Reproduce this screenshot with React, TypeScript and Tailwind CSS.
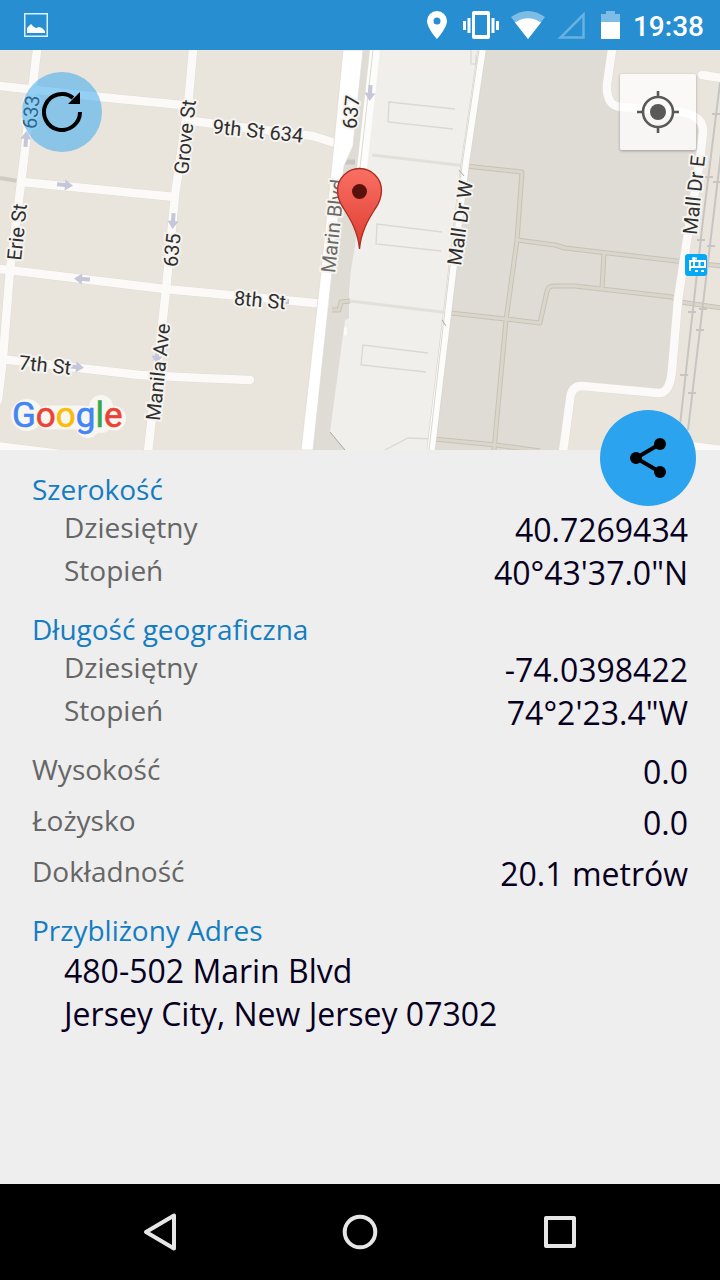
import React from "react";

const roadLabels = [
  { text: "633", x: 31, y: 112, angle: -84, fill: "#2f2f2f" },
  { text: "Grove St", x: 185, y: 137, angle: -84, fill: "#2f2f2f" },
  { text: "9th St 634", x: 258, y: 131, angle: 6, fill: "#2f2f2f" },
  { text: "637", x: 351, y: 112, angle: -84, fill: "#2f2f2f" },
  { text: "Marin Blvd", x: 333, y: 226, angle: -84, fill: "#6b6a66" },
  { text: "635", x: 172, y: 250, angle: -84, fill: "#2f2f2f" },
  { text: "Erie St", x: 17, y: 232, angle: -84, fill: "#2f2f2f" },
  { text: "8th St", x: 260, y: 300, angle: 5, fill: "#2f2f2f" },
  { text: "7th St", x: 45, y: 365, angle: 6, fill: "#2f2f2f" },
  { text: "Manila Ave", x: 158, y: 372, angle: -84, fill: "#2f2f2f" },
  { text: "Mall Dr W", x: 460, y: 223, angle: -82, fill: "#2f2f2f" },
  { text: "Mall Dr E", x: 694, y: 195, angle: -84, fill: "#2f2f2f" },
];

const streets = [
  "M37 50 21 183 10 270 3 357-2 400",
  "M193 50 188 106 175 195 166 290 148 452",
  "M0 86 100 97 182 105",
  "M186 120 215 124 313 136 338 144",
  "M22 182 175 197",
  "M0 269 165 289 325 304",
  "M0 359 140 375 200 378 250 380",
  "M-4 446 60 454",
  "M612 50 607 84Q606 107 622 107L670 111Q704 112 703 132L700 160 687 240 678 300 672 370Q670 394 658 393L582 386Q571 386 570 400L563 452",
  "M702 75 722 78",
  "M690 446 722 450",
];

const footpaths = [
  "M466 166 522 172 517 240 506 320 494 450",
  "M517 240 555 245 565 248 685 262 722 266",
  "M604 253 602 288",
  "M450 313 505 319 540 323 547 291Q548 286 554 286L575 286 672 297 680 302 722 308",
  "M434 439 496 445 540 451",
  "M332 310 339 310 341 302 350 301",
];

const arrows = [
  { x: 65, y: 185, angle: 5 },
  { x: 173, y: 221, angle: 94 },
  { x: 26, y: 139, angle: -86 },
  { x: 82, y: 279, angle: 184 },
  { x: 76, y: 367, angle: 5 },
  { x: 157, y: 356, angle: 94 },
  { x: 370, y: 93, angle: 94 },
];

const ticks = [
  [716, 114], [709, 177], [717, 182], [701, 240], [711, 246], [692, 312],
  [700, 330], [684, 375], [692, 393], [703, 309],
];

function MapPicture() {
  return (
    <svg
      className="block h-full w-full"
      viewBox="0 50 720 400"
      preserveAspectRatio="xMidYMid slice"
      role="img"
      aria-label="Mapa"
    >
      <rect x="-400" width="1600" height="500" fill="#e9e5dd" />
      <path d="M354 50H612L607 84Q606 107 622 107L670 111Q704 112 703 132L687 240 672 370Q670 394 658 393L582 386Q571 386 563 450H307L330 272Z" fill="#dfdbd5" />
      <path d="M376 50H485L465 165 451 275 431 450H345L330 432 345 320 349 318 349 292 351 270 356 240 366 165Z" fill="#f0efeb" />
      <path d="M330 432 345 450" stroke="#aaa8a3" />
      <g fill="none" stroke="#dad8d3" strokeWidth="1.3">
        <path d="M455 109 389 102 388 122 453 129" />
        <path d="M442 232 377 224 376 244 441 251" />
        <path d="M428 353 363 345 361 365 426 372" />
        <path d="M385 450 408 438 434 439" />
      </g>
      <g fill="none" stroke="#e2e0d9" strokeWidth="3">
        <path d="M372 155 466 166M350 301 450 313" />
      </g>
      <g fill="none" strokeLinejoin="round">
        {footpaths.map((d) => <path key={d} d={d} stroke="#c6c3b6" strokeWidth="5" />)}
        {footpaths.map((d) => <path key={d} d={d} stroke="#dad6cc" strokeWidth="3" />)}
        <path d="M0 178 18 181" stroke="#cfccc1" strokeWidth="4" />
      </g>
      <g fill="none" stroke="#c7c5c2" strokeWidth="2">
        <path d="M721 75 703 220 680 425M725 120 713 220 688 430" />
        {ticks.map(([x, y]) => <path key={`${x}-${y}`} d={`M${x - 4} ${y}h8`} />)}
      </g>
      <g fill="none" strokeLinecap="round" strokeLinejoin="round">
        {streets.map((d) => <path key={d} d={d} stroke="#e0dcd4" strokeWidth="9.5" />)}
        {streets.map((d) => <path key={d} d={d} stroke="#fbfaf8" strokeWidth="8.5" />)}
      </g>
      <g fill="none">
        <path d="M482 50 465 165 452 275 431 450" stroke="#d9d6cf" strokeWidth="9" />
        <path d="M482 50 465 165 452 275 431 450" stroke="#fcfcfa" strokeWidth="7.5" />
        <path d="M479 50 462 165 449 275 429 450" stroke="#d9d7d2" strokeWidth="1" />
        <path d="M471 50v14h5v-9" stroke="#d6d3cd" />
        <path d="M375 50 362 168" stroke="#fcfcfa" strokeWidth="10" />
        <path d="M373 50 360 168" stroke="#dcdad5" strokeWidth="1" />
        <path d="M345 162h10" stroke="#c9c6c0" strokeWidth="5" />
        <path d="M442 320 446 326M459 170 464 176" stroke="#aaa8a3" />
      </g>
      <path d="M343 50H363L353 146 344 166 332 272 313 450H301L321 272 333 153Z" fill="#fff" stroke="#dedad3" strokeWidth=".7" />
      <path d="m344 328 3-1v8l-3 1z" fill="#fafaf7" />
      <g fill="#c5c6d7">
        {arrows.map((a) => (
          <path key={`${a.x}-${a.y}`} transform={`translate(${a.x} ${a.y}) rotate(${a.angle})`} d="M-8-2H0V-5.500L8 0 0 5.500V2H-8Z" />
        ))}
        <rect x="285" y="299" width="4" height="5" />
      </g>
      <g
        className="font-[Roboto,sans-serif] text-[20px]"
        textAnchor="middle"
        stroke="#f6f4f0"
        strokeWidth="4"
        strokeLinejoin="round"
        paintOrder="stroke"
      >
        {roadLabels.map((l) => (
          <text key={l.text} transform={`translate(${l.x} ${l.y}) rotate(${l.angle})`} y="7" fill={l.fill}>
            {l.text}
          </text>
        ))}
      </g>
      <rect x="685" y="254" width="22" height="22" rx="3" fill="#03a9f4" />
      <g fill="none" stroke="#fff" strokeWidth="2">
        <path d="M694 257V268M692 258.500H697M690 261H705V267H690ZM699.500 261V267" />
        <path d="M690 261V271M695 271H698M701 271H704" />
      </g>
      <path d="M27 413.500V414M48 417.500H82M88 418V426M101 407V421M114 418V418.500" fill="none" stroke="#f8f6f1" strokeWidth="24" strokeLinecap="round" />
      <circle cx="27" cy="415" r="16" fill="#f8f6f1" />
      <text className="font-[Roboto,sans-serif] text-[35px]" x="12" y="427" strokeWidth=".6">
        <tspan fill="#4285f4" stroke="#4285f4">G</tspan>
        <tspan fill="#ea4335" stroke="#ea4335">o</tspan>
        <tspan fill="#fbbc05" stroke="#fbbc05">o</tspan>
        <tspan fill="#4285f4" stroke="#4285f4">g</tspan>
        <tspan fill="#34a853" stroke="#34a853">l</tspan>
        <tspan fill="#ea4335" stroke="#ea4335">e</tspan>
      </text>
      <defs>
        <linearGradient id="pin" x1="0" y1="0" x2="0" y2="1">
          <stop offset="0" stopColor="#fb7064" />
          <stop offset="1" stopColor="#dd3b2f" />
        </linearGradient>
      </defs>
      <path d="M359.500 249C358 232 351 220 344 209 339 202 337.500 197 337.500 190.500A22 22 0 0 1 381.500 190.500C381.500 197 380 202 375 209 368 220 361 232 359.500 249Z" fill="url(#pin)" stroke="#a92c22" strokeWidth="1.300" />
      <circle cx="359.500" cy="191.500" r="7.500" fill="#59110c" />
    </svg>
  );
}

function StatusBar() {
  return (
    <header className="flex h-[50px] shrink-0 items-center bg-[#278fd1] pr-4 pl-6 text-white">
      <svg className="h-6 w-6" viewBox="0 0 24 24" fill="none">
        <rect x=".75" y=".75" width="22.500" height="22.500" stroke="#d6f1ff" strokeWidth="1.500" />
        <path d="M3 20v-5l2-2 2-2 3 3 2 1 3-1 3 1 3 3v2z" fill="#fff" />
      </svg>
      <div className="ml-auto flex items-center">
        <svg className="mr-4 h-7 w-5" viewBox="0 0 20 28" fill="#fff">
          <path fillRule="evenodd" d="M10 0A10 10 0 0 0 0 10c0 7 10 18 10 18s10-11 10-18A10 10 0 0 0 10 0Zm0 6.500a3.500 3.500 0 1 1 0 7 3.500 3.500 0 0 1 0-7Z" />
        </svg>
        <svg className="mr-3 h-7 w-9" viewBox="0 0 36 28" fill="#fff">
          <path fillRule="evenodd" d="M11 0h14a2 2 0 0 1 2 2v24a2 2 0 0 1-2 2H11a2 2 0 0 1-2-2V2a2 2 0 0 1 2-2Zm1 4v20h12V4Z" />
          <path d="M0 10h3v9H0zM4.500 7h3v15h-3zM28.500 7h3v15h-3zM33 10h3v9h-3z" />
        </svg>
        <svg className="mr-3 h-7 w-8.5" viewBox="0 0 34 28">
          <path d="M17 28 0 6Q17-6 34 6Z" fill="#7cbce5" />
          <path d="M17 28 4 11.500Q17 3 30 11.500Z" fill="#fff" />
        </svg>
        <svg className="mr-4 h-7 w-7" viewBox="0 0 28 28">
          <path d="M3.500 26.500H26.500V3.500Z" fill="none" stroke="#68b1e0" strokeWidth="2.500" />
        </svg>
        <svg className="mr-3 h-7 w-5" viewBox="0 0 20 28">
          <path d="M0 3h5V0h9v3h5v9H0z" fill="#7cbce5" />
          <path d="M0 11h19v17H0z" fill="#fff" />
        </svg>
        <time className="pt-1 font-[Roboto,sans-serif] text-[28px] leading-8 font-medium">19:38</time>
      </div>
    </header>
  );
}

function Row({ label, value, inset }: { label: string; value: string; inset?: boolean }) {
  return (
    <div className={inset ? "flex h-[43px] items-start justify-between pl-8" : "flex h-[43px] items-start justify-between"}>
      <dt className="text-[28px] leading-[38px] text-[#666]">{label}</dt>
      <dd className="text-[32px] leading-[44px] text-[#08001f]">{value}</dd>
    </div>
  );
}

function Title({ children }: { children: React.ReactNode }) {
  return <h2 className="text-[28px] leading-[38px] text-[#147dc2]">{children}</h2>;
}

export default function App() {
  return (
    <div className="flex min-h-screen flex-col bg-[#eee] font-['Open_Sans','Noto_Sans',sans-serif]">
      <StatusBar />
      <section className="relative h-[400px] shrink-0">
        <MapPicture />
        <button aria-label="Odśwież" className="absolute top-[22px] left-[22px] flex size-20 items-center justify-center rounded-full bg-[#2ba3ef]/50">
          <svg className="size-10" viewBox="0 0 40 40" fill="none">
            <path d="M38 20A18 18 0 1 1 31 5.800" stroke="#000" strokeWidth="4" />
            <path d="M38 0V12H26Z" fill="#000" />
          </svg>
        </button>
        <button aria-label="Moja lokalizacja" className="absolute top-6 right-6 flex size-[76px] items-center justify-center rounded-xs bg-white/75 shadow-[0_1px_3px_rgba(0,0,0,0.3)]">
          <svg className="size-[42px]" viewBox="0 0 42 42" fill="none" stroke="#595959" strokeWidth="2.600">
            <circle cx="21" cy="21" r="15" />
            <circle cx="21" cy="21" r="8" fill="#595959" stroke="none" />
            <path d="M21 0V6M21 36V42M0 21H6M36 21H42" />
          </svg>
        </button>
        <button aria-label="Udostępnij" className="absolute right-6 -bottom-14 flex size-24 items-center justify-center rounded-full bg-[#2ba3ef]">
          <svg className="size-10" viewBox="0 0 40 40">
            <path d="M32 6 8 20 32 34" fill="none" stroke="#000" strokeWidth="4" />
            <circle cx="32" cy="6" r="6" />
            <circle cx="8" cy="20" r="6" />
            <circle cx="32" cy="34" r="6" />
          </svg>
        </button>
      </section>
      <main className="flex flex-1 flex-col gap-4 px-8 pt-5 pb-8">
        <section>
          <Title>Szerokość</Title>
          <dl>
            <Row inset label="Dziesiętny" value="40.7269434" />
            <Row inset label="Stopień" value={"40°43'37.0\"N"} />
          </dl>
        </section>
        <section>
          <Title>Długość geograficzna</Title>
          <dl>
            <Row inset label="Dziesiętny" value="-74.0398422" />
            <Row inset label="Stopień" value={"74°2'23.4\"W"} />
          </dl>
        </section>
        <dl className="flex flex-col gap-2">
          <Row label="Wysokość" value="0.0" />
          <Row label="Łożysko" value="0.0" />
          <Row label="Dokładność" value="20.1 metrów" />
        </dl>
        <section>
          <Title>Przybliżony Adres</Title>
          <address className="pl-8 text-[32px] leading-[43px] text-[#08001f] not-italic">
            <p>480-502 Marin Blvd</p>
            <p>Jersey City, New Jersey 07302</p>
          </address>
        </section>
      </main>
      <nav className="flex h-24 shrink-0 items-center justify-center gap-[152px] bg-black">
        <button aria-label="Wstecz" className="flex size-12 items-center justify-center">
          <svg className="size-10" viewBox="0 0 40 40" fill="none" stroke="#e6e6e6" strokeWidth="4" strokeLinejoin="round">
            <path d="M34 3.500V36.500L6 20Z" />
          </svg>
        </button>
        <button aria-label="Ekran główny" className="flex size-12 items-center justify-center">
          <svg className="size-10" viewBox="0 0 40 40" fill="none" stroke="#e6e6e6" strokeWidth="4">
            <circle cx="20" cy="20" r="15.300" />
          </svg>
        </button>
        <button aria-label="Ostatnie aplikacje" className="flex size-12 items-center justify-center">
          <svg className="size-10" viewBox="0 0 40 40" fill="none" stroke="#e6e6e6" strokeWidth="4" strokeLinejoin="round">
            <rect x="6" y="6" width="28" height="28" />
          </svg>
        </button>
      </nav>
    </div>
  );
}
